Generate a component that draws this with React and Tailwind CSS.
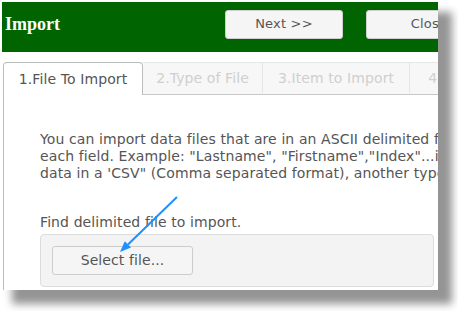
const tabs = [
  { label: '1.File To Import', width: 'w-[140px]', active: true },
  { label: '2.Type of File', width: 'w-[120px]' },
  { label: '3.Item to Import', width: 'w-[147px]' },
  { label: '4.Verify Data', width: 'w-[130px]' }
];

function Arrow() {
  return (
    <svg
      className="pointer-events-none absolute left-0 top-0"
      width="436"
      height="288"
      viewBox="0 0 436 288"
    >
      <line x1="175" y1="195" x2="126" y2="242.5" stroke="#1e90ff" strokeWidth="2" />
      <polygon points="118,250 129,245.6 122.8,239.2" fill="#1e90ff" />
    </svg>
  );
}

function App() {
  return (
    <div className="min-h-screen bg-white pl-[2px] pt-[2px]" style={{ fontFamily: '"DejaVu Sans", Verdana, sans-serif' }}>
      <div className="relative h-[288px] w-[436px] overflow-hidden bg-white shadow-[12px_12px_8px_2px_rgba(0,0,0,0.42)]">
        <header className="flex h-[50px] items-center bg-[#006400] pb-[6px]">
          <h1
            className="w-[223px] shrink-0 pl-[3px] text-[18px] font-bold text-white"
            style={{ fontFamily: '"Liberation Serif", "Times New Roman", serif' }}
          >
            Import
          </h1>
          <button className="h-[29px] w-[118px] shrink-0 rounded-[3px] border border-[#cfcfcf] bg-[#f5f5f5] text-[13px] tracking-[0.2px] text-[#555]">
            Next &gt;&gt;
          </button>
          <button className="ml-[23px] h-[29px] w-[118px] shrink-0 rounded-[3px] border border-[#cfcfcf] bg-[#f5f5f5] pl-[8px] text-[13px] tracking-[0.2px] text-[#555]">
            Close
          </button>
        </header>

        <div className="ml-[1px] mt-[10px] flex h-[33px] w-[600px] tracking-[0.1px]">
          {tabs.map((tab) =>
            tab.active ? (
              <div
                key={tab.label}
                className={`${tab.width} flex shrink-0 items-center justify-center rounded-t-[4px] border border-b-0 border-[#bdbdbd] bg-white text-[14px] text-[#555]`}
              >
                {tab.label}
              </div>
            ) : (
              <div
                key={tab.label}
                className={`${tab.width} flex shrink-0 items-center justify-center whitespace-nowrap border-t border-r border-b border-t-[#e6e6e6] border-r-[#e6e6e6] border-b-[#c8c8c8] bg-[#f7f7f7] text-[14px] text-[#cfcfcf]`}
              >
                {tab.label}
              </div>
            )
          )}
          <div className="flex-1 border-b border-[#c8c8c8]" />
        </div>

        <div className="ml-[1px] h-[200px] w-[700px] border-l border-[#bbb] pl-[36px] pt-[36px] text-[14px] leading-[17px] tracking-[0.1px] text-[#555]">
          <p className="whitespace-nowrap">You can import data files that are in an ASCII delimited format with quotes around</p>
          <p className="whitespace-nowrap">each field. Example: "Lastname", "Firstname","Index"...it is also possible to import</p>
          <p className="whitespace-nowrap">data in a 'CSV" (Comma separated format), another type of delimited file.</p>

          <p className="mt-[32px] whitespace-nowrap">Find delimited file to import.</p>
          <div className="mt-[3px] h-[53px] w-[394px] rounded-[4px] border border-[#dcdcdc] bg-[#f3f3f3] pl-[11px] pt-[11px]">
            <button className="h-[29px] w-[141px] rounded-[3px] border border-[#cccccc] bg-[#f5f5f5] text-[14px] text-[#555]">
              Select file...
            </button>
          </div>
        </div>

        <Arrow />
      </div>
    </div>
  );
}

export default App;
